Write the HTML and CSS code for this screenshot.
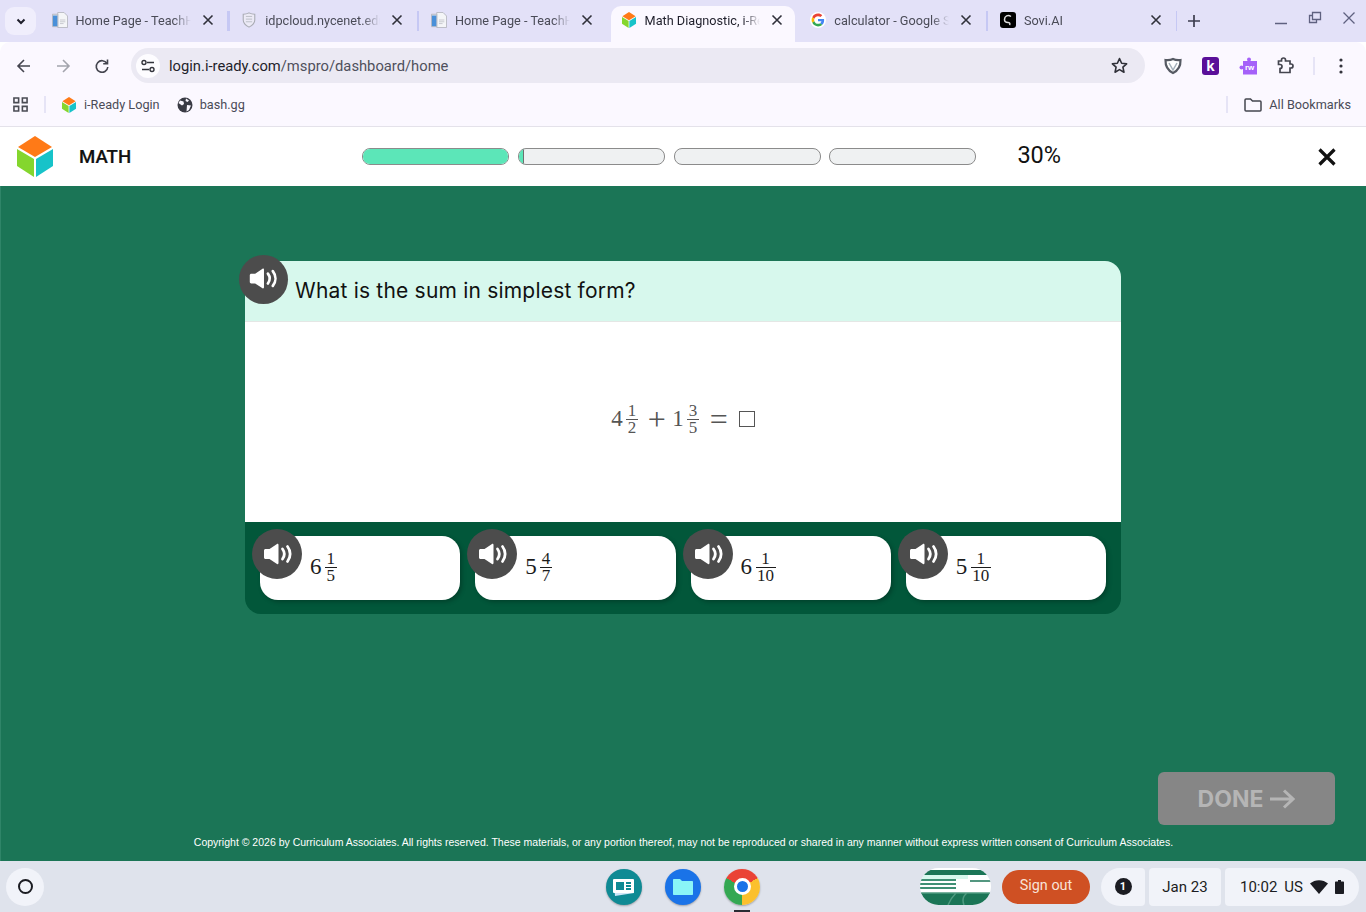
FILE: index.html
```html
<!DOCTYPE html>
<html lang="en">

<head>
    <meta charset="UTF-8">
    <meta name="viewport" content="width=device-width, initial-scale=1.0">
    <title>Math Diagnostic, i-Ready</title>
    <link rel="stylesheet" href="styles.css">
</head>

<body>
    <svg class="icon-defs">
        <symbol id="cube" viewBox="0 0 36 41">
            <polygon fill="#ff7a17" points="18,0 35,11 18,21 1,11" />
            <polygon fill="#84d62d" points="0,13 17,23 17,41 0,30" />
            <polygon fill="#17c3c9" points="19,23 36,13 36,30 19,41" />
        </symbol>
        <symbol id="doc" viewBox="0 0 18 18">
            <path fill="#f4f5f7" stroke="#b4b6bd" d="M6.500.5h7l4 4v13h-11z" />
            <path fill="#dfe1e6" stroke="#b4b6bd" d="M.5 2.500h6v14h-6z" />
            <path fill="#4a90d9" d="M1 4h5v12H1z" />
            <path stroke="#c4c6cc" d="M9 9h6M9 11h6M9 13h4" />
        </symbol>
        <symbol id="close" viewBox="0 0 12 12">
            <path fill="none" stroke="currentColor" stroke-width="1.600" d="M1.500 1.500l9 9m0-9l-9 9" />
        </symbol>
        <symbol id="speaker" viewBox="0 0 50 50">
            <path fill="#fff" d="M12.500 18h4l7.500-5c.8-.5 1.500 0 1.500 1v18c0 1-.7 1.500-1.500 1l-7.500-5h-4c-.8 0-1.500-.7-1.500-1.500v-7c0-.8.7-1.500 1.500-1.500z" />
            <path fill="none" stroke="#fff" stroke-width="2.800" stroke-linecap="round" d="M29.500 18c2.200 3 2.200 7 0 10M34.500 15.500c3.500 4.500 3.500 10.500 0 15" />
        </symbol>
    </svg>

    <div class="tab-strip">
        <button class="tab-search">
            <svg width="12" height="12" viewBox="0 0 12 12">
                <path fill="none" stroke="#1f1f2b" stroke-width="2" d="M2.500 4.500L6 8l3.500-3.500" />
            </svg>
        </button>
        <div class="tab">
            <svg class="favicon"><use href="#doc" /></svg>
            <span class="tab-title">Home Page - TeachHub</span>
            <svg class="tab-close"><use href="#close" /></svg>
        </div>
        <i class="tab-sep"></i>
        <div class="tab">
            <svg class="favicon" viewBox="0 0 18 18">
                <path fill="#eceaf6" stroke="#a9abb3" stroke-width="1.200" d="M9 1c2 1 4 1.500 6.500 1.500V9c0 4-3.500 6.500-6.500 8-3-1.500-6.500-4-6.500-8V2.500C5 2.500 7 2 9 1z" />
                <path stroke="#b8bac2" d="M5.500 5h7M5.500 8h7M5.500 11h7" />
            </svg>
            <span class="tab-title">idpcloud.nycenet.edu</span>
            <svg class="tab-close"><use href="#close" /></svg>
        </div>
        <i class="tab-sep"></i>
        <div class="tab">
            <svg class="favicon"><use href="#doc" /></svg>
            <span class="tab-title">Home Page - TeachHub</span>
            <svg class="tab-close"><use href="#close" /></svg>
        </div>
        <i class="tab-sep tab-sep-off"></i>
        <div class="tab tab-active">
            <svg class="favicon"><use href="#cube" /></svg>
            <span class="tab-title">Math Diagnostic, i-Ready</span>
            <svg class="tab-close"><use href="#close" /></svg>
        </div>
        <i class="tab-sep tab-sep-off"></i>
        <div class="tab">
            <svg class="favicon" viewBox="-6 -6 60 60">
                <circle cx="24" cy="24" r="30" fill="#fff" />
                <path fill="#EA4335" d="M24 9.500c3.540 0 6.710 1.220 9.210 3.600l6.850-6.850C35.900 2.380 30.470 0 24 0 14.620 0 6.510 5.380 2.560 13.220l7.980 6.190C12.430 13.720 17.740 9.500 24 9.500z" />
                <path fill="#4285F4" d="M46.980 24.550c0-1.570-.15-3.090-.38-4.550H24v9.020h12.940c-.58 2.960-2.260 5.480-4.780 7.180l7.730 6c4.510-4.180 7.090-10.360 7.090-17.650z" />
                <path fill="#FBBC05" d="M10.530 28.590c-.48-1.450-.76-2.990-.76-4.590s.27-3.140.76-4.590l-7.980-6.190C.92 16.460 0 20.120 0 24c0 3.880.92 7.540 2.560 10.780l7.970-6.190z" />
                <path fill="#34A853" d="M24 48c6.480 0 11.930-2.130 15.890-5.810l-7.730-6c-2.150 1.450-4.920 2.300-8.160 2.300-6.260 0-11.570-4.220-13.470-9.910l-7.980 6.190C6.510 42.620 14.620 48 24 48z" />
            </svg>
            <span class="tab-title">calculator - Google Search</span>
            <svg class="tab-close"><use href="#close" /></svg>
        </div>
        <i class="tab-sep"></i>
        <div class="tab">
            <svg class="favicon" viewBox="0 0 16 16">
                <rect width="16" height="16" rx="3" fill="#000" />
                <path fill="none" stroke="#ddd" stroke-width="1.500" d="M11 4.500C8 2.500 4.500 4 4.500 7.500c0 2.500 2 3 3.500 3s2.500 1 1.500 2.500" />
            </svg>
            <span class="tab-title">Sovi.AI</span>
            <svg class="tab-close"><use href="#close" /></svg>
        </div>
        <i class="tab-sep tab-sep-thin"></i>
        <svg class="new-tab" viewBox="0 0 12 12">
            <path stroke="#3d3d4e" stroke-width="1.700" d="M6 0v12M0 6h12" />
        </svg>
        <div class="window-controls">
            <svg width="14" height="14" viewBox="0 0 14 14"><path stroke="#5f6180" stroke-width="1.500" d="M1 12.500h12" /></svg>
            <svg width="14" height="14" viewBox="0 0 14 14"><path fill="none" stroke="#5f6180" stroke-width="1.300" d="M4.500 1.500h8v7h-8zM4.500 4.500h-3v7h7v-3" /></svg>
            <svg width="14" height="14" viewBox="0 0 14 14"><path stroke="#5f6180" stroke-width="1.300" d="M1.500 1.500l11 11m0-11l-11 11" /></svg>
        </div>
    </div>

    <div class="toolbar">
        <svg class="nav-icon" viewBox="0 0 16 16"><path fill="none" stroke="#44454f" stroke-width="1.600" d="M14 8H2.500M8 2L2 8l6 6" /></svg>
        <svg class="nav-icon" viewBox="0 0 16 16"><path fill="none" stroke="#a3a4ad" stroke-width="1.600" d="M2 8h11.500M8 2l6 6-6 6" /></svg>
        <svg class="nav-icon" viewBox="0 0 16 16"><path fill="none" stroke="#44454f" stroke-width="1.600" d="M13 5.500A5.800 5.800 0 1 0 13.800 9M13.500 1.500v4.300H9.200" /></svg>
        <div class="omnibox">
            <span class="site-chip">
                <svg width="16" height="16" viewBox="0 0 16 16">
                    <path fill="none" stroke="#33343c" stroke-width="1.400" d="M7 4.500h7M2 11.500h7" />
                    <circle cx="4" cy="4.500" r="2" fill="none" stroke="#33343c" stroke-width="1.400" />
                    <circle cx="12" cy="11.500" r="2" fill="none" stroke="#33343c" stroke-width="1.400" />
                </svg>
            </span>
            <span class="url">login.i-ready.com<span class="url-path">/mspro/dashboard/home</span></span>
            <svg class="star" viewBox="0 0 16 16"><path fill="none" stroke="#2f3038" stroke-width="1.500" stroke-linejoin="round" d="M8 1.500l2 4.400 4.700.5-3.500 3.200 1 4.700L8 11.900l-4.200 2.400 1-4.700L1.300 6.400 6 5.900z" /></svg>
        </div>
        <div class="extensions">
            <svg width="18" height="18" viewBox="0 0 18 18">
                <path fill="#fff" stroke="#565a63" stroke-width="2.200" d="M9 2c2.500 1.200 5 1.300 7.500 1 .2 5.500-2.500 10.500-7.500 13C4 13.500 1.300 8.500 1.500 3 4 3.300 6.500 3.200 9 2z" />
                <path fill="none" stroke="#a5b0ba" stroke-width="1.500" d="M5 6l4 7 4-7" />
            </svg>
            <span class="ext-k">k</span>
            <span class="ext-fw">
                <svg width="18" height="18" viewBox="0 0 18 18">
                    <rect x="4" y="4" width="14" height="13.500" fill="#a561f9" />
                    <circle cx="10" cy="2.500" r="2" fill="#a561f9" />
                    <circle cx="2.500" cy="10.500" r="2" fill="#a561f9" />
                </svg>
                <span class="ext-fw-label">rw</span>
            </span>
            <svg width="17" height="17" viewBox="0 0 17 17"><path fill="none" stroke="#44454f" stroke-width="1.700" d="M1.500 4H4.500V3a2 2 0 0 1 4 0V4H13V7H14a2 2 0 0 1 0 4H13V15.500H3V11.500a2 2 0 0 0 0-4H1.500z" /></svg>
            <i class="toolbar-sep"></i>
            <svg width="4" height="16" viewBox="0 0 4 16"><circle cx="2" cy="2" r="1.600" fill="#33343c" /><circle cx="2" cy="8" r="1.600" fill="#33343c" /><circle cx="2" cy="14" r="1.600" fill="#33343c" /></svg>
        </div>
    </div>

    <div class="bookmarks">
        <svg class="apps-icon" viewBox="0 0 16 16"><path fill="none" stroke="#4a4b54" stroke-width="1.700" d="M1 1h5v5H1zM10 1h5v5h-5zM1 10h5v5H1zM10 10h5v5h-5z" /></svg>
        <i class="bookmark-sep"></i>
        <a class="bookmark">
            <svg class="favicon"><use href="#cube" /></svg>
            i-Ready Login
        </a>
        <a class="bookmark">
            <svg class="favicon" viewBox="0 0 16 16">
                <circle cx="8" cy="8" r="7.500" fill="#3a3b44" />
                <path fill="#fbf8ff" d="M3 3.500l3.500 1 .5 2.500-2 1.500L1.500 6zM9 1.500l3 2-1.500 1.500L8.500 4zM10 8l4 .5-2 4.500-2.500 1.500z" />
            </svg>
            bash.gg
        </a>
        <div class="all-bookmarks">
            <i class="bookmark-sep"></i>
            <svg width="18" height="14" viewBox="0 0 18 14"><path fill="none" stroke="#44454f" stroke-width="1.500" d="M1 2c0-.6.4-1 1-1h4.500l2 2H16c.6 0 1 .4 1 1v8c0 .6-.4 1-1 1H2c-.6 0-1-.4-1-1z" /></svg>
            <span>All Bookmarks</span>
        </div>
    </div>

    <header class="app-header">
        <svg class="app-logo"><use href="#cube" /></svg>
        <span class="app-subject">MATH</span>
        <div class="progress">
            <div class="progress-bar"><div class="progress-fill" style="width: 100%"></div></div>
            <div class="progress-bar"><div class="progress-fill progress-fill-partial" style="width: 5px"></div></div>
            <div class="progress-bar"></div>
            <div class="progress-bar"></div>
        </div>
        <span class="progress-label">30%</span>
        <svg class="app-close" viewBox="0 0 18 18"><path stroke="#111" stroke-width="3.200" d="M1.500 1.500l15 15m0-15l-15 15" /></svg>
    </header>

    <main class="lesson">
        <section class="question-card">
            <div class="question-head">
                <button class="speak speak-question"><svg><use href="#speaker" /></svg></button>
                <span class="question-text">What is the sum in simplest form?</span>
            </div>
            <div class="question-body">
                <div class="math math-grey">
                    <span class="whole">4</span>
                    <span class="frac"><span>1</span><span class="frac-den">2</span></span>
                    <span class="op">+</span>
                    <span class="whole">1</span>
                    <span class="frac"><span>3</span><span class="frac-den">5</span></span>
                    <span class="op op-eq">=</span>
                    <span class="answer-box"></span>
                </div>
            </div>
            <div class="answers">
                <div class="answer">
                    <button class="speak speak-answer"><svg><use href="#speaker" /></svg></button>
                    <div class="math">
                        <span class="whole">6</span>
                        <span class="frac"><span>1</span><span class="frac-den">5</span></span>
                    </div>
                </div>
                <div class="answer">
                    <button class="speak speak-answer"><svg><use href="#speaker" /></svg></button>
                    <div class="math">
                        <span class="whole">5</span>
                        <span class="frac"><span>4</span><span class="frac-den">7</span></span>
                    </div>
                </div>
                <div class="answer">
                    <button class="speak speak-answer"><svg><use href="#speaker" /></svg></button>
                    <div class="math">
                        <span class="whole">6</span>
                        <span class="frac"><span>1</span><span class="frac-den">10</span></span>
                    </div>
                </div>
                <div class="answer">
                    <button class="speak speak-answer"><svg><use href="#speaker" /></svg></button>
                    <div class="math">
                        <span class="whole">5</span>
                        <span class="frac"><span>1</span><span class="frac-den">10</span></span>
                    </div>
                </div>
            </div>
        </section>

        <button class="done-btn">
            DONE
            <svg width="25" height="20" viewBox="0 0 25 20"><path fill="none" stroke="#b5b5b5" stroke-width="3" d="M0 10h23M14 1.500l9 8.500-9 8.500" /></svg>
        </button>

        <footer class="copyright">Copyright © 2026 by Curriculum Associates. All rights reserved. These materials, or any portion thereof, may not be reproduced or shared in any manner without express written consent of Curriculum Associates.</footer>
    </main>

    <div class="shelf">
        <span class="launcher"><i class="launcher-ring"></i></span>
        <div class="shelf-apps">
            <span class="app-icon app-classroom">
                <svg width="24" height="20" viewBox="0 0 24 20">
                    <path fill="#cfe6f7" d="M2 7l20-3v12L3 19z" />
                    <rect x="1" y="2" width="21" height="14" rx="1" fill="#fff" />
                    <rect x="4" y="5" width="8" height="8" fill="#0f8a94" />
                    <path stroke="#0f8a94" stroke-width="1.800" d="M14 6h5M14 9h5M14 12h5" />
                </svg>
            </span>
            <span class="app-icon app-files">
                <svg width="22" height="18" viewBox="0 0 22 18"><path fill="#8af5f7" d="M1 2c0-.6.4-1 1-1h6l2 2h10c.6 0 1 .4 1 1v12c0 .6-.4 1-1 1H2c-.6 0-1-.4-1-1z" /></svg>
            </span>
            <span class="app-icon app-chrome"><i class="chrome-dot"></i></span>
        </div>
        <div class="shelf-tray">
            <div class="shelf-thumb">
                <svg width="71" height="37" viewBox="0 0 71 37">
                    <rect width="71" height="37" fill="#fff" />
                    <rect width="71" height="5" y="2" fill="#1b7556" />
                    <rect y="7" width="48" height="4" fill="#d7f8ed" />
                    <path stroke="#3f8f74" stroke-width="1.800" d="M0 12h36M0 16h36M0 20h36" />
                    <path stroke="#1b7556" stroke-width="1.500" d="M50 13h21" />
                    <rect y="25" width="71" height="12" fill="#1b7556" />
                    <path fill="none" stroke="#4f9a80" stroke-width="1.500" d="M0 25h71M28 37c2-5 5-9 8-12M44 37c-2-5-1-9 3-12" />
                </svg>
            </div>
            <span class="sign-out">Sign out</span>
            <div class="status-pill status-notify"><span class="notify-badge">1</span></div>
            <div class="status-pill status-date">Jan 23</div>
            <div class="status-pill status-time">
                <span>10:02</span>
                <span>US</span>
                <svg width="18" height="14" viewBox="0 0 18 14"><path fill="#1b1c22" d="M0 3.500C5-1 13-1 18 3.500L9 14z" /></svg>
                <svg width="9" height="14" viewBox="0 0 9 14"><path fill="#1b1c22" d="M3 0h3v1.500h2c.6 0 1 .4 1 1V13c0 .6-.4 1-1 1H1c-.6 0-1-.4-1-1V2.500c0-.6.4-1 1-1h2z" /></svg>
            </div>
        </div>
    </div>
</body>

</html>
```

FILE: styles.css
```css
:root {
    --chrome-strip: #e3e1f8;
    --chrome-bar: #fbf8ff;
    --chrome-sep: #c6c8f4;
    --chrome-text: #4a4b57;
    --lesson-green: #1b7556;
    --answers-green: #02573a;
    --shelf-bg: #dfe3ec;
    --pill-bg: #f1f3f9;
}

* {
    margin: 0;
    padding: 0;
    box-sizing: border-box;
}

body {
    width: 1366px;
    height: 912px;
    overflow: hidden;
    display: flex;
    flex-direction: column;
    background: #fff;
    font-family: Roboto, "Liberation Sans", sans-serif;
}

button {
    border: none;
    background: none;
    font: inherit;
}

.icon-defs {
    display: none;
}

.favicon {
    width: 16px;
    height: 16px;
    flex: none;
}

/* browser tabs */
.tab-strip {
    height: 42px;
    flex: none;
    display: flex;
    align-items: center;
    padding-left: 5px;
    background: var(--chrome-strip);
}

.tab-search {
    width: 31px;
    height: 28px;
    margin-right: 5.500px;
    flex: none;
    display: flex;
    align-items: center;
    justify-content: center;
    border-radius: 9px;
    background: #f0eefc;
}

.tab {
    width: 184px;
    height: 36px;
    margin-top: 6px;
    flex: none;
    display: flex;
    align-items: center;
    gap: 8px;
    padding-left: 10px;
    padding-bottom: 8px;
    color: var(--chrome-text);
    font-size: 12.700px;
}

.tab-active {
    background: var(--chrome-bar);
    border-radius: 10px 10px 0 0;
    color: #1f1f2b;
}

.tab-title {
    width: 115px;
    flex: none;
    white-space: nowrap;
    overflow: hidden;
    -webkit-mask-image: linear-gradient(to right, #000 85%, transparent);
    mask-image: linear-gradient(to right, #000 85%, transparent);
}

.tab-close {
    width: 12px;
    height: 12px;
    margin-left: 3px;
    flex: none;
    color: #30313b;
}

.tab-sep {
    width: 2.500px;
    height: 20px;
    margin: 0 1.600px;
    flex: none;
    background: var(--chrome-sep);
}

.tab-sep-off {
    background: none;
}

.tab-sep-thin {
    width: 1.500px;
}

.new-tab {
    width: 12px;
    height: 12px;
    margin-left: 9px;
    flex: none;
}

.window-controls {
    margin-left: auto;
    margin-right: 10px;
    margin-top: -6px;
    display: flex;
    gap: 20px;
}

/* toolbar */
.toolbar {
    height: 42px;
    flex: none;
    display: flex;
    align-items: center;
    padding-left: 16px;
    padding-top: 5px;
    background: var(--chrome-bar);
    border-radius: 10px 10px 0 0;
}

.nav-icon {
    width: 16px;
    height: 16px;
    margin-right: 23px;
    flex: none;
}

.omnibox {
    width: 1014px;
    height: 35px;
    margin-left: -2px;
    flex: none;
    display: flex;
    align-items: center;
    padding: 0 17px 0 5px;
    border-radius: 18px;
    background: #ebe9f3;
}

.site-chip {
    width: 24px;
    height: 24px;
    flex: none;
    display: flex;
    align-items: center;
    justify-content: center;
    border-radius: 50%;
    background: #fdfcff;
}

.url {
    margin-left: 9px;
    font-size: 14.750px;
    color: #1f1f2b;
}

.url-path {
    color: #4f505c;
}

.star {
    width: 17px;
    height: 17px;
    margin-left: auto;
}

.extensions {
    margin-left: 19px;
    display: flex;
    align-items: center;
    gap: 20px;
}

.ext-k {
    width: 17px;
    height: 18px;
    display: flex;
    align-items: center;
    justify-content: center;
    border-radius: 3px;
    background: #5a0f99;
    color: #fff;
    font: 700 15px "Liberation Sans", sans-serif;
}

.ext-fw {
    position: relative;
    width: 18px;
    height: 18px;
}

.ext-fw-label {
    position: absolute;
    left: 6px;
    top: 6px;
    color: #fff;
    font: 700 8px "Liberation Sans", sans-serif;
}

.toolbar-sep {
    width: 2px;
    height: 18px;
    margin-left: -1px;
    margin-right: 4px;
    background: #e6e4f6;
}

/* bookmarks */
.bookmarks {
    height: 43px;
    flex: none;
    display: flex;
    align-items: center;
    padding: 0 15px 1px 13px;
    background: var(--chrome-bar);
    border-bottom: 1px solid #e4e2ea;
    color: var(--chrome-text);
    font-size: 12.700px;
}

.apps-icon {
    width: 15px;
    height: 15px;
    flex: none;
}

.bookmark-sep {
    width: 2px;
    height: 17px;
    margin-left: 16px;
    margin-right: 15px;
    flex: none;
    background: #e6e4f6;
}

.bookmark {
    display: flex;
    align-items: center;
    gap: 7px;
    margin-right: 17px;
}

.all-bookmarks {
    margin-left: auto;
    display: flex;
    align-items: center;
    gap: 7px;
}

.all-bookmarks .bookmark-sep {
    margin: 0 9px 0 0;
}

/* i-Ready header */
.app-header {
    height: 59px;
    flex: none;
    display: flex;
    align-items: center;
    padding-left: 17px;
    background: #fff;
}

.app-logo {
    width: 36px;
    height: 41px;
    flex: none;
}

.app-subject {
    width: 283px;
    margin-left: 26px;
    margin-top: 1px;
    font-size: 18.600px;
    font-weight: 500;
    color: #111;
    -webkit-text-stroke: 0.2px #111;
}

.progress {
    display: flex;
    gap: 8.800px;
    margin-top: -1px;
}

.progress-bar {
    width: 147px;
    height: 17px;
    overflow: hidden;
    border: 1px solid #8b8b8b;
    border-radius: 8px;
    background: #eff1f2;
}

.progress-fill {
    height: 100%;
    background: #5ce6b8;
}

.progress-fill-partial {
    border-right: 1px solid #6f6f6f;
}

.progress-label {
    margin-left: 41px;
    margin-top: -3px;
    font-size: 23.500px;
    color: #111;
}

.app-close {
    width: 18px;
    height: 18px;
    margin-left: auto;
    margin-right: 30px;
    flex: none;
}

/* lesson */
.lesson {
    flex: 1;
    display: flex;
    flex-direction: column;
    padding-top: 75px;
    background: var(--lesson-green);
    border-left: 1px solid #2f8568;
}

.question-card {
    position: relative;
    width: 876px;
    margin-left: 244px;
}

.question-head {
    height: 61px;
    display: flex;
    align-items: center;
    padding-left: 50px;
    background: #d7f8ed;
    border-bottom: 1px solid #e4e7e5;
    border-radius: 16px 16px 0 0;
    color: #111;
    font-family: Inter, sans-serif;
    font-size: 21px;
    letter-spacing: 0.2px;
}

.question-text {
    margin-top: -2px;
}

.question-body {
    height: 200px;
    display: flex;
    align-items: center;
    justify-content: center;
    padding-bottom: 6px;
    background: #fff;
}

.speak {
    position: absolute;
    display: block;
    border-radius: 50%;
    background: #4c4c4c;
}

.speak svg {
    display: block;
    width: 100%;
    height: 100%;
}

.speak-question {
    left: -6px;
    top: -6px;
    width: 49px;
    height: 49px;
}

.speak-question svg {
    margin-top: 1px;
}

.speak-answer {
    left: -8px;
    top: -7px;
    width: 50px;
    height: 50px;
}

.speak-answer svg {
    margin-top: 2px;
    margin-left: 1px;
}

.answers {
    display: flex;
    gap: 15px;
    padding: 14px 15px;
    background: var(--answers-green);
    border-radius: 0 0 16px 16px;
}

.answer {
    position: relative;
    flex: 1;
    height: 64px;
    display: flex;
    align-items: center;
    padding-left: 50px;
    background: #fff;
    border-radius: 18px;
    box-shadow: 2px 2px 4px rgba(0, 0, 0, 0.25);
}

.answer .math {
    margin-top: -2px;
}

/* fractions */
.math {
    display: flex;
    align-items: center;
    color: #1c1c1c;
    font-family: "Liberation Serif", serif;
    font-size: 23px;
}

.math-grey {
    color: #555;
}

.whole {
    width: 12px;
}

.frac {
    display: inline-flex;
    flex-direction: column;
    align-items: center;
    margin-left: 3px;
    font-size: 17px;
    line-height: 16px;
}

.frac > span {
    padding: 0 1.500px;
}

.frac-den {
    align-self: stretch;
    text-align: center;
    border-top: 1px solid currentColor;
}

.op {
    margin: 0 6.500px 0 10px;
    font-size: 32px;
    line-height: 1;
}

.op-eq {
    margin: 0 11px 0 11px;
}

.answer-box {
    width: 16px;
    height: 16px;
    border: 1px solid #555;
}

.done-btn {
    width: 177px;
    height: 53px;
    margin-top: auto;
    margin-left: auto;
    margin-right: 31px;
    flex: none;
    display: flex;
    align-items: center;
    justify-content: center;
    gap: 7px;
    border-radius: 6px;
    background: #868686;
    color: #b5b5b5;
    font-family: Inter, sans-serif;
    font-size: 23px;
    font-weight: 700;
}

.copyright {
    height: 36px;
    flex: none;
    padding-top: 11px;
    text-align: center;
    color: #fff;
    font-family: "Liberation Sans", sans-serif;
    font-size: 10.500px;
}

/* chromeos shelf */
.shelf {
    height: 51px;
    flex: none;
    display: flex;
    align-items: center;
    padding: 0 7px 0 6px;
    background: var(--shelf-bg);
}

.launcher {
    width: 38px;
    height: 38px;
    flex: none;
    display: flex;
    align-items: center;
    justify-content: center;
    border-radius: 50%;
    background: var(--pill-bg);
}

.launcher-ring {
    width: 15px;
    height: 15px;
    border: 2px solid #1b1c22;
    border-radius: 50%;
}

.shelf-apps {
    margin-left: 562px;
    display: flex;
    gap: 23px;
}

.app-icon {
    position: relative;
    width: 36px;
    height: 36px;
    display: flex;
    align-items: center;
    justify-content: center;
    border-radius: 50%;
    box-shadow: 0 1px 2px rgba(0, 0, 0, 0.3);
}

.app-classroom {
    background: #0f8a94;
}

.app-files {
    background: #1a73e8;
}

.app-chrome {
    background: conic-gradient(from -60deg, #ea4335 0 120deg, #fbc02d 120deg 240deg, #34a853 240deg 360deg);
}

.app-chrome::after {
    content: '';
    position: absolute;
    left: 10px;
    bottom: -7px;
    width: 16px;
    height: 2px;
    background: #2a2b33;
}

.chrome-dot {
    width: 17px;
    height: 17px;
    border: 3px solid #fff;
    border-radius: 50%;
    background: #1a73e8;
}

.shelf-tray {
    margin-left: auto;
    display: flex;
    align-items: center;
}

.shelf-thumb {
    width: 71px;
    height: 37px;
    margin-right: 11px;
    overflow: hidden;
    border-radius: 19px;
}

.shelf-thumb svg {
    display: block;
}

.sign-out {
    width: 88px;
    height: 34px;
    margin-right: 11px;
    padding-bottom: 2px;
    display: flex;
    align-items: center;
    justify-content: center;
    border-radius: 17px;
    background: #cf5023;
    color: #f9e3d8;
    font-size: 14.400px;
}

.status-pill {
    height: 38px;
    display: flex;
    align-items: center;
    justify-content: center;
    border-radius: 4px;
    background: var(--pill-bg);
    color: #1b1c22;
    font-size: 15px;
}

.status-notify {
    width: 44px;
    margin-right: 4px;
    border-radius: 19px 4px 4px 19px;
}

.notify-badge {
    width: 17px;
    height: 17px;
    display: flex;
    align-items: center;
    justify-content: center;
    border-radius: 50%;
    background: #1b1c22;
    color: #fff;
    font-size: 11px;
    font-weight: 700;
}

.status-date {
    width: 72px;
    margin-right: 4px;
}

.status-time {
    width: 134px;
    gap: 7px;
    border-radius: 4px 19px 19px 4px;
}
```
